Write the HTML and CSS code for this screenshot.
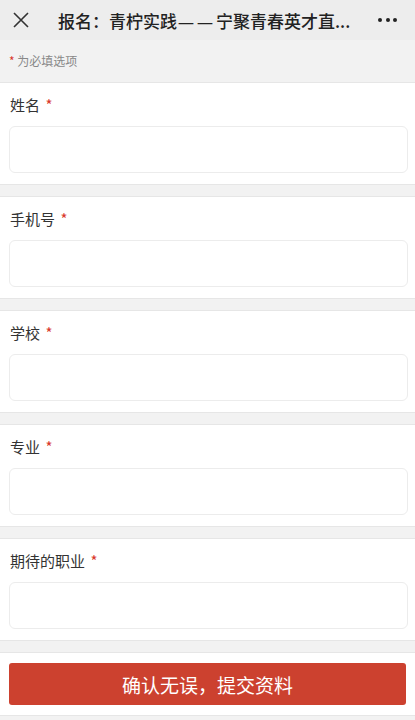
FILE: index.html
```html
<!DOCTYPE html>
<html lang="zh">

<head>
    <meta charset="UTF-8">
    <meta name="viewport" content="width=device-width, initial-scale=1.0">
    <title>报名：青柠实践——宁聚青春英才直通车</title>
    <link rel="stylesheet" href="styles.css">
</head>

<body>
    <div class="header">
        <svg class="close" width="18" height="18" viewBox="0 0 18 18">
            <path d="M2 2 L16 16 M16 2 L2 16" stroke="#333" stroke-width="1.6" fill="none" />
        </svg>
        <div class="title">报名：青柠实践<span class="dash">——</span>宁聚青春英才直...</div>
        <div class="more"><span></span><span></span><span></span></div>
    </div>

    <div class="tip"><span class="star">*</span> 为必填选项</div>

    <form class="form">
        <div class="field">
            <label>姓名 <span class="star">*</span></label>
            <input type="text">
        </div>
        <div class="field">
            <label>手机号 <span class="star">*</span></label>
            <input type="text">
        </div>
        <div class="field">
            <label>学校 <span class="star">*</span></label>
            <input type="text">
        </div>
        <div class="field">
            <label>专业 <span class="star">*</span></label>
            <input type="text">
        </div>
        <div class="field">
            <label>期待的职业 <span class="star">*</span></label>
            <input type="text">
        </div>
        <div class="submit-row">
            <button type="button" class="submit">确认无误，提交资料</button>
        </div>
    </form>
</body>

</html>
```

FILE: styles.css
```css
body {
    font-family: "Noto Sans CJK SC", "Noto Sans", sans-serif;
    margin: 0;
    padding: 0;
    background-color: #f2f2f2;
    color: #333;
}

.header {
    display: flex;
    align-items: center;
    height: 40px;
    background-color: #ededed;
    padding: 0 12px;
}

.close {
    flex: none;
}

.title {
    flex: 1;
    margin-left: 28px;
    font-size: 17px;
    font-weight: 500;
    color: #222;
    white-space: nowrap;
    overflow: hidden;
}

/* 两个短横，中间留缝 */
.title .dash {
    font-family: "Noto Sans", sans-serif;
    font-size: 16px;
    letter-spacing: 3px;
    margin-left: 1px;
}

.more {
    display: flex;
    gap: 3.5px;
    margin-right: 6px;
}

.more span {
    width: 4px;
    height: 4px;
    border-radius: 50%;
    background-color: #222;
}

.tip {
    height: 42px;
    line-height: 42px;
    padding-left: 9px;
    font-size: 12px;
    color: #888;
    border-bottom: 1px solid #e6e6e6;
}

.star {
    color: #d9382b;
}

.field {
    background-color: #fff;
    padding: 11px 7px 11px 9px;
    margin-bottom: 11px;
    border-bottom: 1px solid #e6e6e6;
}

.field + .field {
    border-top: 1px solid #e6e6e6;
}

.field label {
    display: block;
    font-size: 15px;
    line-height: 21px;
    margin-bottom: 11px;
    padding-left: 1px;
}

.field label .star {
    margin-left: 2px;
}

.field input {
    display: block;
    box-sizing: border-box;
    width: 100%;
    height: 47px;
    border: 1px solid #ececec;
    border-radius: 6px;
    background-color: #fff;
}

.submit-row {
    background-color: #fff;
    border-top: 1px solid #e6e6e6;
    padding: 10px 9px 10px 9px;
    border-bottom: 1px solid #e6e6e6;
}

.submit {
    display: block;
    width: 100%;
    height: 42px;
    border: none;
    border-radius: 3px;
    background-color: #cc412f;
    color: #fff;
    font-family: "Noto Sans CJK SC", "Noto Sans", sans-serif;
    font-size: 19px;
}
```
